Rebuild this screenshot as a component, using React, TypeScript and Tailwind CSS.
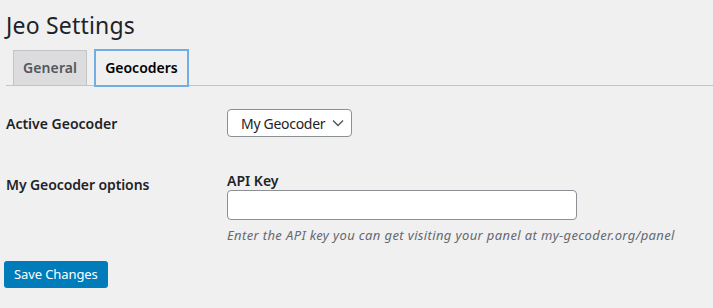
import React from "react";

export default function App() {
  return (
    <div className="h-[308px] w-full overflow-hidden bg-[#f0f0f1] text-[#1d2327] [font-family:'Noto_Sans',sans-serif]">
      <div className="pl-[6px] pt-[10px]">
        <h1 className="text-[23px] leading-[30px] font-normal tracking-[0.2px]">Jeo Settings</h1>
        <div className="mt-[10px] flex items-end border-b border-[#c3c4c7] pl-[7px]">
          <div className="-mb-px h-[36px] border border-[#c3c4c7] bg-[#dcdcde] px-[9px] text-[14px] leading-[34px] font-semibold text-[#50575e] tracking-[0.1px]">
            General
          </div>
          <div className="-mb-px ml-[8px] h-[36px] border border-[#72aee6] bg-[#f0f0f1] px-[9px] text-[14px] leading-[34px] font-semibold text-black shadow-[0_0_0_1px_#72aee6]">
            Geocoders
          </div>
        </div>
        <div className="mt-[23px] flex items-center">
          <div className="w-[221px] text-[14px] font-semibold">Active Geocoder</div>
          <div className="flex h-[28px] w-[125px] items-center rounded-[4px] border border-[#8c8f94] bg-white pl-[13px] text-[14px] tracking-[-0.3px]">
            <span>My Geocoder</span>
            <svg className="ml-auto mr-[6px]" width="14" height="14" viewBox="0 0 14 14" fill="none">
              <path d="M2 4.5 L7 9.5 L12 4.5" stroke="#50575e" strokeWidth="1.4" />
            </svg>
          </div>
        </div>
        <div className="mt-[34px] flex items-start">
          <div className="w-[221px] pt-[3px] text-[14px] font-semibold tracking-[-0.1px]">My Geocoder options</div>
          <div className="flex flex-col">
            <div className="text-[14px] leading-[19px] font-semibold">API Key</div>
            <div className="h-[30px] w-[350px] rounded-[4px] border border-[#8c8f94] bg-white" />
            <div className="mt-[6px] text-[13px] leading-[18px] italic tracking-[0.37px] text-[#646970]">
              Enter the API key you can get visiting your panel at my-gecoder.org/panel
            </div>
          </div>
        </div>
      </div>
      <div className="mt-[17px] pl-[4px]">
        <button className="h-[27px] rounded-[3px] bg-[#007cba] px-[10px] text-[13px] tracking-[-0.1px] text-white">
          Save Changes
        </button>
      </div>
    </div>
  );
}
